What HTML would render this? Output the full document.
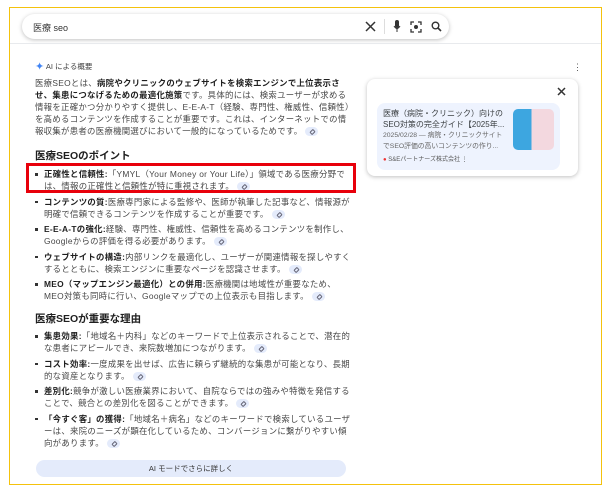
<!DOCTYPE html>
<html><head><meta charset="utf-8"><style>
*{margin:0;padding:0;box-sizing:border-box}
body{width:613px;height:497px;background:#fff;font-family:"Liberation Sans","Noto Sans CJK JP",sans-serif;color:#3c4043;position:relative;overflow:hidden}
.frame{position:absolute;left:9px;top:7px;width:593px;height:478px;border:1.5px solid #f4c20d}
.search{position:absolute;left:22px;top:14px;width:427px;height:25px;border-radius:13px;box-shadow:0 1px 4px rgba(0,0,0,.25);background:#fff;font-size:9px;color:#333}
.search .q{position:absolute;left:11px;top:7px}
.hr{position:absolute;left:10px;top:43px;width:591px;height:1px;background:#e8eaed}
.ai{position:absolute;left:35px;top:60px;font-size:7.5px;color:#444}
.main{position:absolute;left:35px;top:77px;width:318px;font-size:8.4px;line-height:12px;color:#474747;letter-spacing:.3px}
b{color:#1f1f1f}
h3{font-size:10.5px;color:#1f1f1f;line-height:14px;letter-spacing:0}
h3.a{margin:12px 0 5px}
h3.b{margin:10px 0 4px}
ul{list-style:none}
li{position:relative;padding-left:9px;margin-bottom:3.5px}
li:before{content:"";position:absolute;left:0;top:5px;width:2.5px;height:2.5px;background:#333}
.l{display:inline-block;width:13px;height:9px;background:#e4ebfb;border-radius:5px;vertical-align:middle;margin-left:3px;position:relative}
.l:after{content:"";position:absolute;left:5px;top:3px;width:3px;height:2px;border:1px solid #667;border-radius:1px;transform:rotate(-45deg)}
.red{position:absolute;left:26px;top:163px;width:330px;height:30px;border:3px solid #e8000b}
.btn{position:absolute;left:36px;top:460px;width:310px;height:17px;border-radius:9px;background:#e4ebfb;font-size:7.5px;text-align:center;line-height:17px;color:#333}
.card{position:absolute;left:367px;top:79px;width:211px;height:97px;border-radius:8px;box-shadow:0 1px 4px rgba(0,0,0,.25);background:#fff}
.inner{position:absolute;left:10px;top:24px;width:183px;height:67px;border-radius:8px;background:#eef3fe}
.ct{position:absolute;left:6px;top:5px;width:128px;font-size:8px;line-height:11px;color:#3c4043;white-space:nowrap;overflow:hidden}
.cs{position:absolute;left:6px;top:27px;width:128px;font-size:6.8px;line-height:11px;color:#666;white-space:nowrap;overflow:hidden}
.src{position:absolute;left:6px;top:51px;font-size:6px;color:#555}
.img{position:absolute;left:136px;top:6px;width:41px;height:41px;border-radius:5px;background:linear-gradient(90deg,#3da6e0 0 45%,#f3d8df 45%)}
</style></head><body>
<div class="frame"></div>
<div class="search"><span class="q">医療 seo</span>
<svg style="position:absolute;left:343px;top:7px" width="11" height="11" viewBox="0 0 11 11"><path d="M1 1L10 10M10 1L1 10" stroke="#333" stroke-width="1.5"/></svg>
<div style="position:absolute;left:362px;top:5px;width:1px;height:15px;background:#ddd"></div>
<svg style="position:absolute;left:371px;top:6px" width="8" height="13" viewBox="0 0 8 13"><rect x="2" y="0" width="4" height="8" rx="2" fill="#333"/><path d="M1 6Q4 11 7 6M4 9V12" stroke="#333" fill="none"/></svg>
<svg style="position:absolute;left:388px;top:7px" width="12" height="12" viewBox="0 0 12 12"><path d="M1 4V1H4M8 1H11V4M11 8V11H8M4 11H1V8" stroke="#333" fill="none" stroke-width="1.3"/><circle cx="6" cy="6" r="2" fill="#333"/></svg>
<svg style="position:absolute;left:409px;top:7px" width="11" height="11" viewBox="0 0 11 11"><circle cx="4.5" cy="4.5" r="3.3" stroke="#333" stroke-width="1.4" fill="none"/><path d="M7 7L10 10" stroke="#333" stroke-width="1.6"/></svg>
</div>
<div class="hr"></div>
<div class="ai"><span style="color:#4285f4;font-size:11px;vertical-align:-1px">✦</span> AI による概要</div>
<div style="position:absolute;left:573px;top:62px;font-size:9px;color:#555">⋮</div>
<div class="main">
<p>医療SEOとは、<b>病院やクリニックのウェブサイトを検索エンジンで上位表示させ、集患につなげるための最適化施策</b>です。具体的には、検索ユーザーが求める情報を正確かつ分かりやすく提供し、E-E-A-T（経験、専門性、権威性、信頼性）を高めるコンテンツを作成することが重要です。これは、インターネットでの情報収集が患者の医療機関選びにおいて一般的になっているためです。<span class="l"></span></p>
<h3 class="a">医療SEOのポイント</h3>
<ul>
<li><b>正確性と信頼性:</b>「YMYL（Your Money or Your Life）」領域である医療分野では、情報の正確性と信頼性が特に重視されます。<span class="l"></span></li>
<li><b>コンテンツの質:</b>医療専門家による監修や、医師が執筆した記事など、情報源が明確で信頼できるコンテンツを作成することが重要です。<span class="l"></span></li>
<li><b>E-E-A-Tの強化:</b>経験、専門性、権威性、信頼性を高めるコンテンツを制作し、Googleからの評価を得る必要があります。<span class="l"></span></li>
<li><b>ウェブサイトの構造:</b>内部リンクを最適化し、ユーザーが関連情報を探しやすくするとともに、検索エンジンに重要なページを認識させます。<span class="l"></span></li>
<li><b>MEO（マップエンジン最適化）との併用:</b>医療機関は地域性が重要なため、MEO対策も同時に行い、Googleマップでの上位表示も目指します。<span class="l"></span></li>
</ul>
<h3 class="b">医療SEOが重要な理由</h3>
<ul>
<li><b>集患効果:</b>「地域名＋内科」などのキーワードで上位表示されることで、潜在的な患者にアピールでき、来院数増加につながります。<span class="l"></span></li>
<li><b>コスト効率:</b>一度成果を出せば、広告に頼らず継続的な集患が可能となり、長期的な資産となります。<span class="l"></span></li>
<li><b>差別化:</b>競争が激しい医療業界において、自院ならではの強みや特徴を発信することで、競合との差別化を図ることができます。<span class="l"></span></li>
<li><b>「今すぐ客」の獲得:</b>「地域名＋病名」などのキーワードで検索しているユーザーは、来院のニーズが顕在化しているため、コンバージョンに繋がりやすい傾向があります。<span class="l"></span></li>
</ul>
</div>
<div class="red"></div>
<div class="btn">AI モードでさらに詳しく</div>
<div class="card">
<svg style="position:absolute;left:190px;top:8px" width="9" height="9" viewBox="0 0 9 9"><path d="M1 1L8 8M8 1L1 8" stroke="#333" stroke-width="1.5"/></svg>
<div class="inner">
<div class="ct">医療（病院・クリニック）向けの<br>SEO対策の完全ガイド【2025年...</div>
<div class="cs">2025/02/28 — 病院・クリニックサイト<br>でSEO評価の高いコンテンツの作り...</div>
<div class="src"><span style="color:#e33">●</span> S&amp;Eパートナーズ株式会社 ⋮</div>
<div class="img"></div>
</div>
</div>
</body></html>
